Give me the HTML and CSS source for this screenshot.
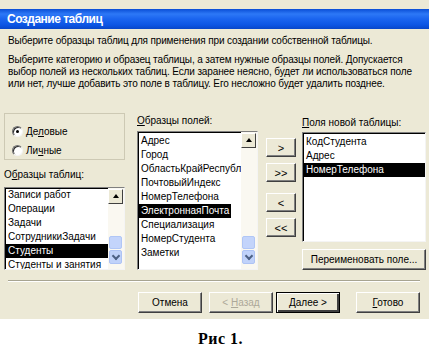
FILE: index.html
```html
<!DOCTYPE html>
<html lang="ru">
<head>
    <meta charset="UTF-8">
    <title>Создание таблиц</title>
    <link rel="stylesheet" href="styles.css">
</head>
<body>
    <div class="dialog">
        <div class="titlebar">Создание таблиц</div>
        <p class="intro">Выберите образцы таблиц для применения при создании собственной таблицы.</p>
        <p class="desc">Выберите категорию и образец таблицы, а затем нужные образцы полей. Допускается<br>выбор полей из нескольких таблиц. Если заранее неясно, будет ли использоваться поле<br>или нет, лучше добавить это поле в таблицу. Его несложно будет удалить позднее.</p>

        <div class="main">
            <div class="col-left">
                <div class="group">
                    <div class="radio-row"><span class="radio checked"></span><span>Де<u>л</u>овые</span></div>
                    <div class="radio-row"><span class="radio"></span><span>Ли<u>ч</u>ные</span></div>
                </div>
                <div class="label label-tables">О<u>б</u>разцы таблиц:</div>
                <div class="listbox list-tables">
                    <ul class="items">
                        <li>Записи работ</li>
                        <li>Операции</li>
                        <li>Задачи</li>
                        <li>СотрудникиЗадачи</li>
                        <li class="selected">Студенты</li>
                        <li>Студенты и занятия</li>
                    </ul>
                    <div class="scrollbar">
                        <div class="sb-up"></div>
                        <div class="sb-track"></div>
                        <div class="sb-thumb"></div>
                        <div class="sb-down"></div>
                    </div>
                </div>
            </div>

            <div class="col-mid">
                <div class="label"><u>О</u>бразцы полей:</div>
                <div class="listbox list-fields">
                    <ul class="items">
                        <li>Адрес</li>
                        <li>Город</li>
                        <li>ОбластьКрайРеспублика</li>
                        <li>ПочтовыйИндекс</li>
                        <li>НомерТелефона</li>
                        <li class="selected fit">ЭлектроннаяПочта</li>
                        <li>Специализация</li>
                        <li>НомерСтудента</li>
                        <li>Заметки</li>
                    </ul>
                    <div class="scrollbar">
                        <div class="sb-up"></div>
                        <div class="sb-track"></div>
                        <div class="sb-thumb"></div>
                        <div class="sb-down"></div>
                    </div>
                </div>
            </div>

            <div class="col-arrows">
                <div class="btn arrow"><span>&gt;</span></div>
                <div class="btn arrow"><span>&gt;&gt;</span></div>
                <div class="btn arrow arrow-back"><span>&lt;</span></div>
                <div class="btn arrow"><span>&lt;&lt;</span></div>
            </div>

            <div class="col-right">
                <div class="label label-new"><u>П</u>оля новой таблицы:</div>
                <div class="listbox list-new">
                    <ul class="items">
                        <li>КодСтудента</li>
                        <li>Адрес</li>
                        <li class="selected">НомерТелефона</li>
                    </ul>
                </div>
                <div class="btn rename"><span>Переименовать поле...</span></div>
            </div>
        </div>

        <div class="separator"></div>

        <div class="footer">
            <div class="btn wide cancel"><span>Отмена</span></div>
            <div class="btn wide disabled back"><span>&lt; <u>Н</u>азад</span></div>
            <div class="btn wide default next"><span><u>Д</u>алее &gt;</span></div>
            <div class="btn wide done"><span><u>Г</u>отово</span></div>
        </div>
    </div>
    <div class="figure">Рис 1.</div>
</body>
</html>
```

FILE: styles.css
```css
body { margin: 0; width: 429px; height: 348px; background: #fff; font-family: "Liberation Sans", Arial, sans-serif; font-size: 10px; color: #000; overflow: hidden; }
.dialog { background: #ece9d6; height: 319px; padding-top: 9px; box-sizing: border-box; overflow: hidden; }
.titlebar { height: 20px; line-height: 20px; padding-left: 7px; color: #fff; font-weight: bold; font-size: 12px; letter-spacing: -0.5px; background: linear-gradient(180deg, #0a4ed6 0%, #2d78f6 25%, #1a64ef 50%, #0c55e4 80%, #0846c8 100%); }
.intro { margin: 5px 0 0 8px; line-height: 13px; letter-spacing: -0.15px; }
.desc { margin: 7px 0 0 8px; line-height: 12px; letter-spacing: -0.12px; }
.main { display: grid; grid-template-columns: 121px 121px 26px 118px; column-gap: 12px; margin: 20px 0 0 4px; align-items: start; }
.main .col-arrows { margin-left: -4px; }
.main .col-right { margin-left: -6px; }

.group { margin-top: 3px; height: 47px; box-sizing: border-box; border: 1px solid #cdc9b4; padding-top: 8px; }
.radio-row { display: flex; align-items: center; height: 19px; padding-left: 7px; gap: 3px; }
.radio { width: 9px; height: 9px; border-radius: 50%; background: #fff; border: 1px solid; border-color: #707070 #f4f4f4 #f4f4f4 #707070; box-shadow: inset 1px 1px 0 #303030; position: relative; }
.radio.checked::after { content: ""; position: absolute; left: 3px; top: 3px; width: 3px; height: 3px; border-radius: 50%; background: #000; }

.label { line-height: 13px; margin-top: 4px; }
.label-tables { margin-top: 8px; }
.label-new { margin-top: 6px; }

.listbox { display: flex; background: #fff; border: 1px solid; border-color: #808080 #f4f4f4 #f4f4f4 #808080; box-shadow: inset 1px 1px 0 #000; box-sizing: border-box; overflow: hidden; }
.list-tables { margin-top: 6px; height: 83px; }
.list-fields { margin-top: 4px; height: 139px; }
.list-new { margin-top: 3px; height: 110px; }
.items { list-style: none; margin: 0; padding: 0 0 0 1px; flex: 1; min-width: 0; }
.list-fields .items, .list-new .items { padding-top: 2px; }
.items li { line-height: 14px; padding-left: 2px; white-space: nowrap; overflow: hidden; }
.items li.selected { background: #000; color: #fff; }
.items li.fit { width: fit-content; padding-right: 2px; }

.scrollbar { width: 15px; display: flex; flex-direction: column; padding: 1px 1px 5px 0; background: #faf8f1; }
.sb-up { height: 13px; background: #ece9d6; border: 1px solid; border-color: #fff #404040 #404040 #fff; position: relative; }
.sb-up::after { content: ""; position: absolute; left: 4px; top: 4px; border-left: 3px solid transparent; border-right: 3px solid transparent; border-bottom: 4px solid #000; }
.sb-track { flex: 1; }
.sb-thumb { height: 11px; margin: 0 1px 1px; border-radius: 2px; background: #c3d4fb; border: 1px solid #b0c6f6; }
.sb-down { height: 12px; margin: 0 1px; border-radius: 2px; background: #c0d2fa; border: 1px solid #aec3f4; position: relative; }
.sb-down::after { content: ""; position: absolute; left: 3px; top: 2px; width: 4px; height: 4px; border-right: 2px solid #4d6185; border-bottom: 2px solid #4d6185; transform: rotate(45deg); }

.btn { box-sizing: border-box; display: flex; align-items: center; justify-content: center; background: #ece9d6; border: 1px solid; border-color: #fff #404040 #404040 #fff; box-shadow: inset -1px -1px 0 #808080; white-space: nowrap; }
.arrow { height: 19px; margin-top: 6px; font-size: 11px; }
.col-arrows .arrow:first-child { margin-top: 28px; }
.col-arrows .arrow-back { margin-top: 11px; }
.rename { height: 21px; margin-top: 7px; }

.separator { margin: 10px 9px 0 8px; border-top: 1px solid #a7a491; border-bottom: 1px solid #fff; }
.footer { display: flex; justify-content: flex-end; margin: 10px 9px 0 0; }
.wide { width: 64px; height: 21px; }
.back { margin-left: 7px; }
.next { margin-left: 3px; }
.done { margin-left: 16px; }
.disabled { color: #aca899; }
.default { border-color: #000; box-shadow: inset 1px 1px 0 #fff, inset -2px -2px 0 #404040; }

.figure { font-family: "Liberation Serif", "Times New Roman", serif; font-weight: bold; font-size: 16px; line-height: 18px; letter-spacing: 0.5px; margin: 11px 0 0 198px; }
```
